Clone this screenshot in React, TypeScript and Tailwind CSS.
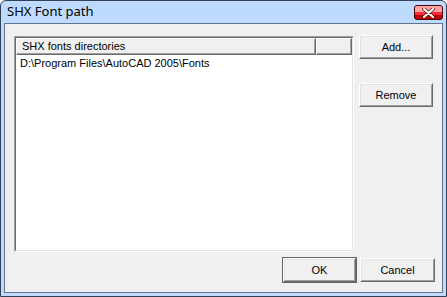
import type { ReactNode } from "react";

function Btn({ children, w = "w-[75px]", isDefault = false }: { children: ReactNode; w?: string; isDefault?: boolean }) {
    const face = (
        <div className="h-full w-full border border-t-white border-l-white border-b-[#696969] border-r-[#696969]">
            <div className="flex h-full w-full items-center justify-center border border-t-[#e3e3e3] border-l-[#e3e3e3] border-b-[#a0a0a0] border-r-[#a0a0a0] bg-[#f0f0f0] text-[11px] text-black">
                {children}
            </div>
        </div>
    );
    if (isDefault) {
        return <div className={`${w} h-[26px] border border-[#646464]`}>{face}</div>;
    }
    return <div className={`${w} h-[24px]`}>{face}</div>;
}

function HeaderCell({ children, w }: { children?: ReactNode; w: string }) {
    return (
        <div className={`${w} h-full border border-t-white border-l-white border-b-[#696969] border-r-[#696969]`}>
            <div className="flex h-full items-center border-b border-r border-[#a0a0a0] bg-[#f0f0f0] pl-[5px] text-[11px] text-black">
                {children}
            </div>
        </div>
    );
}

function CloseButton() {
    return (
        <div className="relative flex h-[15px] w-[29px] flex-col overflow-hidden rounded-[3px] border border-red-950 bg-red-700">
            <div className="h-[6px] bg-red-300" />
            <div className="h-[3px] bg-red-500" />
            <svg className="absolute left-[7px] top-[2px]" width="13" height="10" viewBox="0 0 13 10">
                <path d="M2 1 L11 9 M11 1 L2 9" stroke="#5a1d14" strokeWidth="3.6" strokeLinecap="round" />
                <path d="M2 1 L11 9 M11 1 L2 9" stroke="#ffffff" strokeWidth="2" strokeLinecap="round" />
            </svg>
        </div>
    );
}

export default function App() {
    return (
        <div className="h-[297px] w-[447px] bg-white" style={{ fontFamily: '"Liberation Sans", Arial, sans-serif' }}>
            <div className="flex h-full w-full flex-col rounded-t-[6px] border border-slate-700 bg-blue-200">
                {/* title bar */}
                <div className="flex h-[22px] items-start justify-between pl-[6px] pr-[3px]">
                    <span className="pt-[2px] text-[13px] leading-[17px] text-black" style={{ fontFamily: '"Noto Sans", "Open Sans", sans-serif' }}>
                        SHX Font path
                    </span>
                    <div className="pt-[4px]">
                        <CloseButton />
                    </div>
                </div>

                {/* client */}
                <div className="mx-[3px] mb-[3px] flex-1 border border-slate-500 bg-[#f0f0f0] pb-[9px] pl-[9px] pr-[7px] pt-[11px]">
                    <div className="flex items-start gap-[5px]">
                        {/* list view */}
                        <div className="mt-px h-[216px] w-[340px] border border-t-[#a0a0a0] border-l-[#a0a0a0] border-b-white border-r-white">
                            <div className="flex h-full flex-col border border-t-[#696969] border-l-[#696969] border-b-[#e3e3e3] border-r-[#e3e3e3] bg-white">
                                <div className="flex h-[17px]">
                                    <HeaderCell w="w-[300px]">SHX fonts directories</HeaderCell>
                                    <HeaderCell w="w-[36px]" />
                                </div>
                                <div className="flex h-[16px] items-center pl-[4px] pt-[1px] text-[11px] text-black">
                                    D:\Program Files\AutoCAD 2005\Fonts
                                </div>
                            </div>
                        </div>

                        {/* side buttons */}
                        <div className="flex flex-col gap-[24px]">
                            <Btn w="w-[74px]">Add...</Btn>
                            <Btn w="w-[74px]">Remove</Btn>
                        </div>
                    </div>

                    <div className="mt-[5px] flex items-center justify-end gap-[3px]">
                        <Btn isDefault>OK</Btn>
                        <Btn>Cancel</Btn>
                    </div>
                </div>
            </div>
        </div>
    );
}
